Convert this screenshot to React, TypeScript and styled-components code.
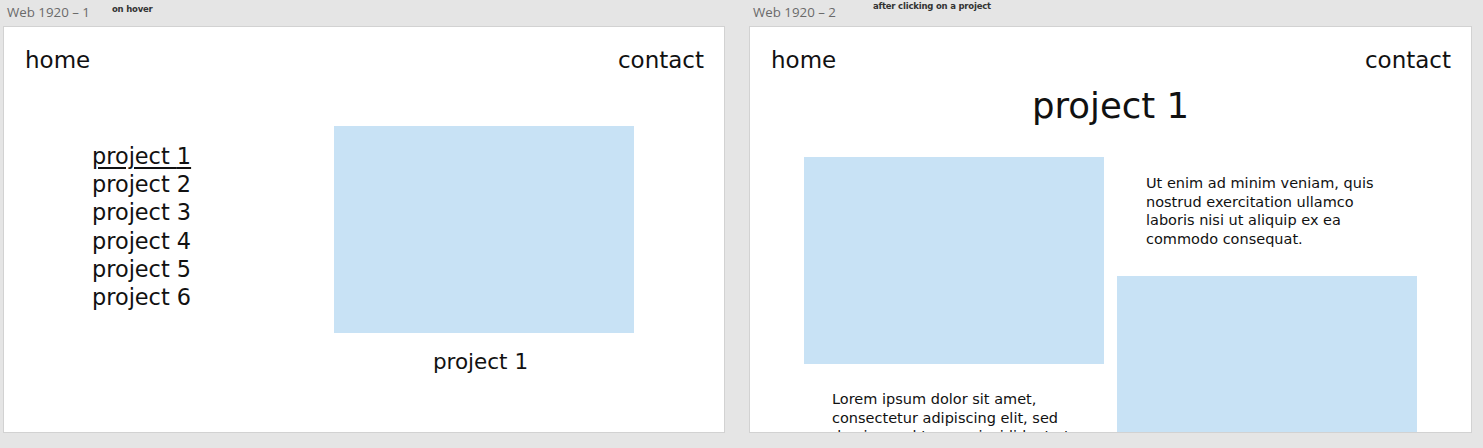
import React from "react";
import styled, { createGlobalStyle } from "styled-components";

const Global = createGlobalStyle`
  html, body { margin: 0; padding: 0; background: #e5e5e5; }
  body { overflow: hidden; }
`;

const Page = styled.div`
  display: flex;
  gap: 24px;
  padding-left: 3px;
  height: 448px;
  background: #e5e5e5;
`;

const Board = styled.div`
  display: flex;
  flex-direction: column;
`;

const LabelRow = styled.div`
  display: flex;
  align-items: flex-start;
  height: 26px;
`;

const Label = styled.span`
  font-family: "Open Sans", "Liberation Sans", sans-serif;
  font-size: 13.3px;
  line-height: 16px;
  color: #6a6a6a;
  margin: 4px 0 0 4px;
  white-space: nowrap;
`;

const Note = styled.span<{ $left: number; $top: number }>`
  font-family: "DejaVu Sans", sans-serif;
  font-weight: bold;
  font-size: 8.5px;
  line-height: 10px;
  color: #333;
  letter-spacing: -0.2px;
  margin-left: ${(p) => p.$left}px;
  margin-top: ${(p) => p.$top}px;
  white-space: nowrap;
`;

const Artboard = styled.div<{ $width: number }>`
  box-sizing: border-box;
  width: ${(p) => p.$width}px;
  height: 407px;
  background: #fff;
  border: 1px solid #d2d2d2;
  overflow: hidden;
  display: flex;
  flex-direction: column;
  font-family: "DejaVu Sans", sans-serif;
  color: #111;
`;

const Nav = styled.div`
  display: flex;
  justify-content: space-between;
  padding: 20px 20px 0 21px;
  font-size: 23px;
  line-height: 27px;
  height: 28px;
  flex-shrink: 0;
`;

const NavLink = styled.span``;

const HoverBody = styled.div`
  display: flex;
  align-items: flex-start;
  padding-left: 88px;
`;

const ProjectList = styled.ul`
  list-style: none;
  margin: 67px 0 0 0;
  padding: 0;
  width: 242px;
  font-size: 22.4px;
  line-height: 28.2px;
`;

const ProjectItem = styled.li<{ $active?: boolean }>`
  text-decoration: ${(p) => (p.$active ? "underline" : "none")};
  text-decoration-thickness: 1.5px;
  text-underline-offset: 3px;
`;

const Figure = styled.div`
  display: flex;
  flex-direction: column;
  align-items: center;
  margin-top: 51px;
`;

const ImageBox = styled.div<{ $mt?: number }>`
  width: 300px;
  height: 207px;
  background: #c8e2f5;
  margin-top: ${(p) => p.$mt ?? 0}px;
  flex-shrink: 0;
`;

const Caption = styled.div`
  margin: 15px 7px 0 0;
  font-size: 21.5px;
  line-height: 28px;
`;

const Title = styled.h1`
  margin: 11px 0 0 0;
  text-align: center;
  font-weight: normal;
  font-size: 35.5px;
  line-height: 40px;
  height: 40px;
  flex-shrink: 0;
`;

const DetailGrid = styled.div`
  display: grid;
  grid-template-columns: 300px 300px;
  column-gap: 13px;
  margin-top: 31px;
  padding-left: 54px;
  flex-shrink: 0;
`;

const Column = styled.div`
  display: flex;
  flex-direction: column;
`;

const Paragraph = styled.p<{ $mt: number; $ml: number }>`
  margin: ${(p) => p.$mt}px 0 0 ${(p) => p.$ml}px;
  width: 240px;
  font-size: 14.5px;
  line-height: 18.7px;
`;

const projects = [1, 2, 3, 4, 5, 6];

export default function App() {
  return (
    <>
      <Global />
      <Page>
        <Board>
          <LabelRow>
            <Label>Web 1920 – 1</Label>
            <Note $left={22} $top={4}>on hover</Note>
          </LabelRow>
          <Artboard $width={722}>
            <Nav>
              <NavLink>home</NavLink>
              <NavLink>contact</NavLink>
            </Nav>
            <HoverBody>
              <ProjectList>
                {projects.map((n) => (
                  <ProjectItem key={n} $active={n === 1}>
                    project {n}
                  </ProjectItem>
                ))}
              </ProjectList>
              <Figure>
                <ImageBox />
                <Caption>project 1</Caption>
              </Figure>
            </HoverBody>
          </Artboard>
        </Board>
        <Board>
          <LabelRow>
            <Label>Web 1920 – 2</Label>
            <Note $left={37} $top={1}>after clicking on a project</Note>
          </LabelRow>
          <Artboard $width={723}>
            <Nav>
              <NavLink>home</NavLink>
              <NavLink>contact</NavLink>
            </Nav>
            <Title>project 1</Title>
            <DetailGrid>
              <Column>
                <ImageBox />
                <Paragraph $mt={26} $ml={28}>
                  Lorem ipsum dolor sit amet, consectetur adipiscing elit, sed
                  do eiusmod tempor incididunt ut labore et dolore magna aliqua.
                </Paragraph>
              </Column>
              <Column>
                <Paragraph $mt={17} $ml={29}>
                  Ut enim ad minim veniam, quis nostrud exercitation ullamco
                  laboris nisi ut aliquip ex ea commodo consequat.
                </Paragraph>
                <ImageBox $mt={27} />
              </Column>
            </DetailGrid>
          </Artboard>
        </Board>
      </Page>
    </>
  );
}
